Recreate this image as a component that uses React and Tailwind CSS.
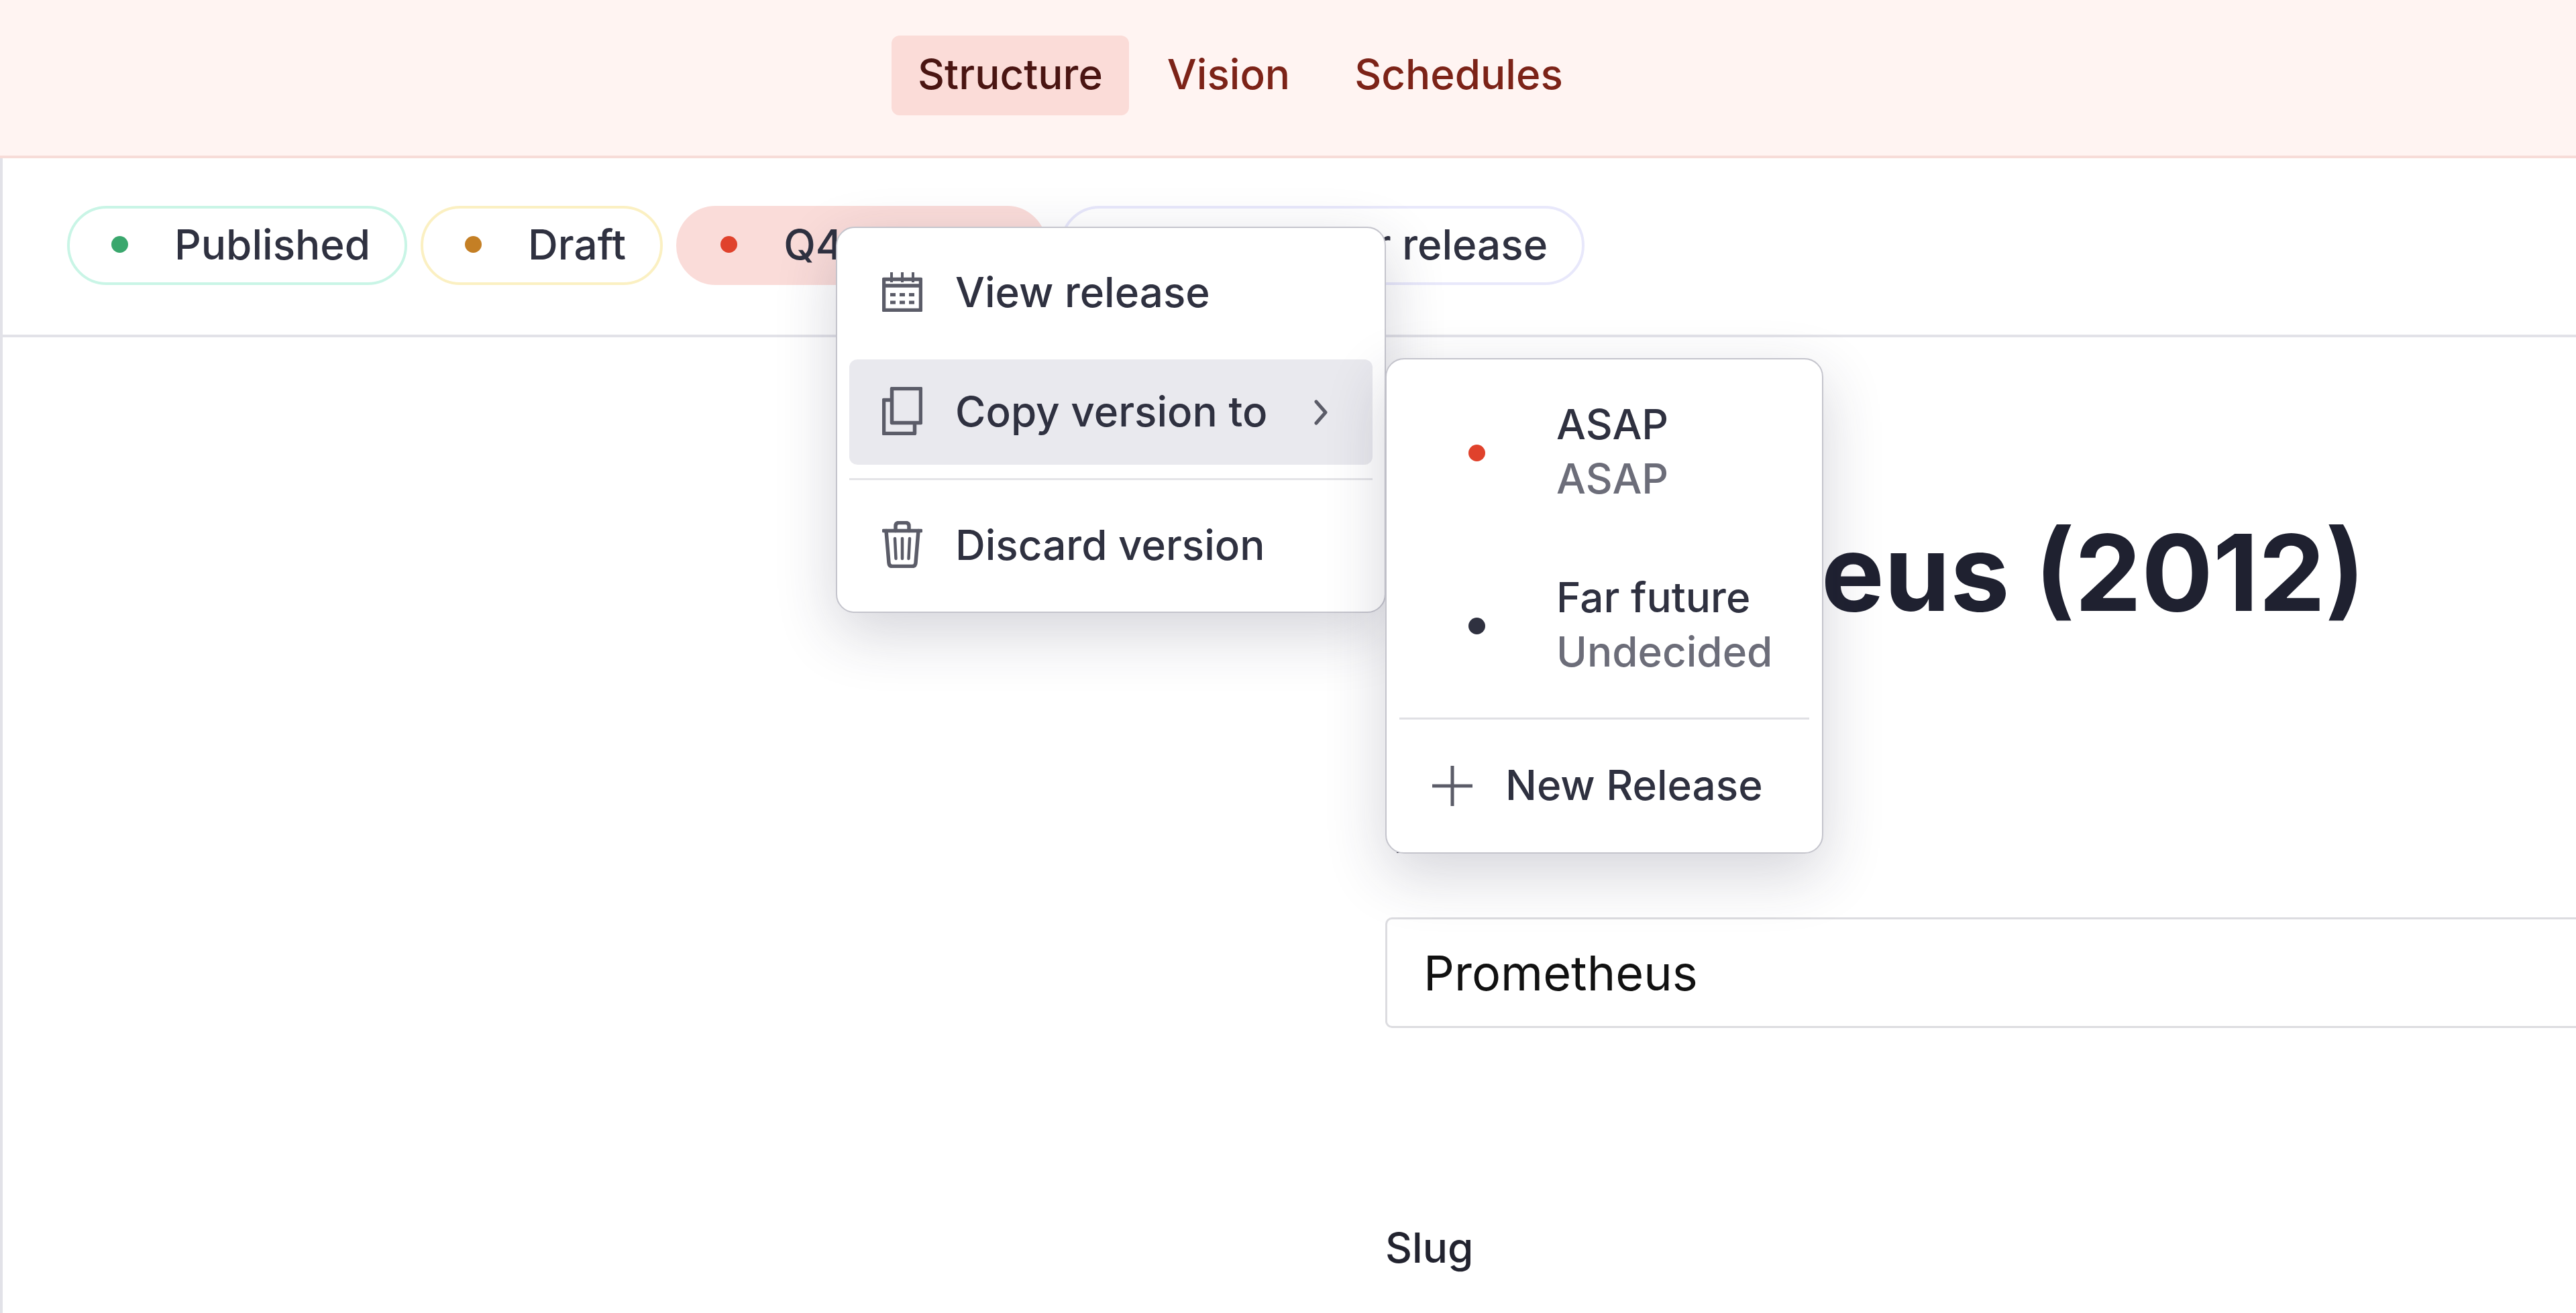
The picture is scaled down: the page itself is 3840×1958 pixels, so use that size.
import React from 'react';

const tabs = [
  { label: 'Structure', active: true },
  { label: 'Vision' },
  { label: 'Schedules' },
];

const CalendarIcon = () => (
  <svg viewBox="0 0 60 60" className="w-[60px] h-[60px] shrink-0 -mt-[3px]" fill="none" stroke="#5b5c68" strokeWidth="5.5">
    <path d="M2.5 11.5h55v46h-55z" strokeLinejoin="round" />
    <path d="M2.5 21h55" />
    <path d="M14 1v15M30 1v15M46 1v15" strokeWidth="4" />
    <path d="M12 34.5h8M26 34.5h8M40 34.5h8M12 46h8M26 46h8M40 46h8" strokeWidth="5" />
  </svg>
);

const CopyIcon = () => (
  <svg viewBox="0 0 60 72" className="w-[60px] h-[72px] shrink-0 -mt-[3px]" fill="none" stroke="#5b5c68" strokeWidth="5.5" strokeLinejoin="round">
    <path d="M14.5 2.500h43v51h-43z" />
    <path d="M14.5 19.5h-12v50h46v-16" />
  </svg>
);

const TrashIcon = () => (
  <svg viewBox="0 0 60 70" className="w-[60px] h-[70px] shrink-0 -mt-[3px]" fill="none" stroke="#5b5c68" strokeWidth="5.5" strokeLinejoin="round" strokeLinecap="round">
    <path d="M2 14.5h56" />
    <path d="M20 14.5v-7q0-5 5-5h10q5 0 5 5v7" />
    <path d="M6 14.5l4 48q.5 5 5 5h30q4.500 0 5-5l4-48" />
    <path d="M19 26l1.500 30M30 26v30M41 26l-1.500 30" strokeWidth="4.5" />
  </svg>
);

function Chip({ dot, label, className, labelClass = 'ml-[69px]' }) {
  return (
    <div className={`h-[118px] rounded-[59px] border-4 flex items-center shrink-0 pl-[62px] pr-[51px] ${className}`}>
      <span className={`w-[25px] h-[25px] rounded-full shrink-0 -mt-[3px] ${dot}`} />
      <span className={`whitespace-nowrap pb-[3px] ${labelClass}`}>{label}</span>
    </div>
  );
}

function MenuItem({ icon, label, active, chevron }) {
  return (
    <div className={`h-[157px] rounded-[12px] flex items-center pl-[49px] pr-[67px] ${active ? 'bg-[#e9e9ee]' : ''}`}>
      {icon}
      <span className="ml-[49px] flex-1 whitespace-nowrap pb-[2px]">{label}</span>
      {chevron && (
        <svg viewBox="0 0 20 38" className="w-[20px] h-[38px] shrink-0" fill="none" stroke="#5b5c68" strokeWidth="5" strokeLinecap="round" strokeLinejoin="round">
          <path d="M3 3l14 16L3 35" />
        </svg>
      )}
    </div>
  );
}

function ReleaseItem({ dot, title, sub }) {
  return (
    <div className="h-[258px] flex items-center">
      <span className={`w-[25px] h-[25px] rounded-full shrink-0 ml-[122px] ${dot}`} />
      <div className="ml-[106px] leading-[81px] pb-[4px]">
        <div className="text-[#2f3140]">{title}</div>
        <div className="text-[#6c6d79]">{sub}</div>
      </div>
    </div>
  );
}

export default function App() {
  return (
    <div className="relative w-full h-[1958px] overflow-hidden bg-white font-['Inter',sans-serif] font-medium text-[62px] leading-[72px] text-[#2f3140]">
      {/* barre du haut */}
      <header className="h-[236px] bg-[#fff4f2] border-b-4 border-[#f7dcd8] pt-[53px] pl-[1329px] flex items-start gap-[18px]">
        {tabs.map((t) => (
          <div
            key={t.label}
            className={`h-[119px] px-[39px] pb-[4px] rounded-[12px] flex items-center ${t.active ? 'bg-[#fbdcd8] text-[#4a1512]' : 'text-[#7c2318]'}`}
          >
            {t.label}
          </div>
        ))}
      </header>

      <div className="border-l-4 border-[#e2e2e8] h-full">
        {/* versions */}
        <div className="h-[267px] border-b-4 border-[#e2e2e8] pl-[96px] pt-[71px] flex items-start gap-[20px]">
          <Chip dot="bg-[#3aa76d]" label="Published" className="border-[#c9f5e6]" />
          <Chip dot="bg-[#c47f25]" label="Draft" className="border-[#fbf0c2]" />
          <Chip dot="bg-[#e0422c]" label="Q4 release" className="border-[#fadcd9] bg-[#fadcd9] w-[552px]" />
          <Chip dot="bg-[#5b5bd6]" label="Another release" labelClass="ml-auto" className="border-[#e8e8fb] w-[782px]" />
        </div>

        {/* document */}
        <main className="pl-[2061px] pt-[261px]">
          <h1 className="text-[158px] leading-[180px] font-bold text-[#1f2130] whitespace-nowrap -ml-[5px]">Prometheus (2012)</h1>
          <label className="block mt-[270px] h-[72px] text-[#22232f] font-normal">Title</label>
          <div className="mt-[82px] h-[165px] border-[3px] border-r-0 border-[#dcdce0] rounded-l-[10px] flex items-center pl-[54px] text-[#111111] text-[72px] font-normal">
            Prometheus
          </div>
          <label className="block mt-[292px] text-[#22232f]">Slug</label>
        </main>
      </div>

      {/* menu contextuel */}
      <div className="absolute left-[1246px] top-[338px] w-[820px] h-[576px] bg-white rounded-[28px] border-2 border-[#c4c4cc] p-[18px] flex flex-col shadow-[0_30px_90px_rgba(40,40,70,0.2)]">
        <MenuItem icon={<CalendarIcon />} label="View release" />
        <div className="h-[21px] shrink-0" />
        <MenuItem icon={<CopyIcon />} label="Copy version to" active chevron />
        <div className="h-[3px] bg-[#e4e4e8] mt-[20px] mb-[19px] shrink-0" />
        <MenuItem icon={<TrashIcon />} label="Discard version" />
      </div>

      {/* sous-menu */}
      <div className="absolute left-[2065px] top-[534px] w-[653px] h-[739px] bg-white rounded-[28px] border-2 border-[#c4c4cc] px-[19px] pt-[10px] flex flex-col shadow-[0_30px_90px_rgba(40,40,70,0.2)]">
        <div className="-mx-[19px]">
          <ReleaseItem dot="bg-[#e0422c]" title="ASAP" sub="ASAP" />
          <ReleaseItem dot="bg-[#2f3140]" title="Far future" sub="Undecided" />
        </div>
        <div className="h-[3px] bg-[#e0e0e4] mt-[8px] shrink-0" />
        <div className="flex items-center h-[198px] pl-[49px]">
          <svg viewBox="0 0 60 60" className="w-[60px] h-[60px] shrink-0" fill="none" stroke="#5b5c68" strokeWidth="5">
            <path d="M0 30h60M30 0v60" />
          </svg>
          <span className="ml-[49px] whitespace-nowrap pb-[2px]">New Release</span>
        </div>
      </div>
    </div>
  );
}
